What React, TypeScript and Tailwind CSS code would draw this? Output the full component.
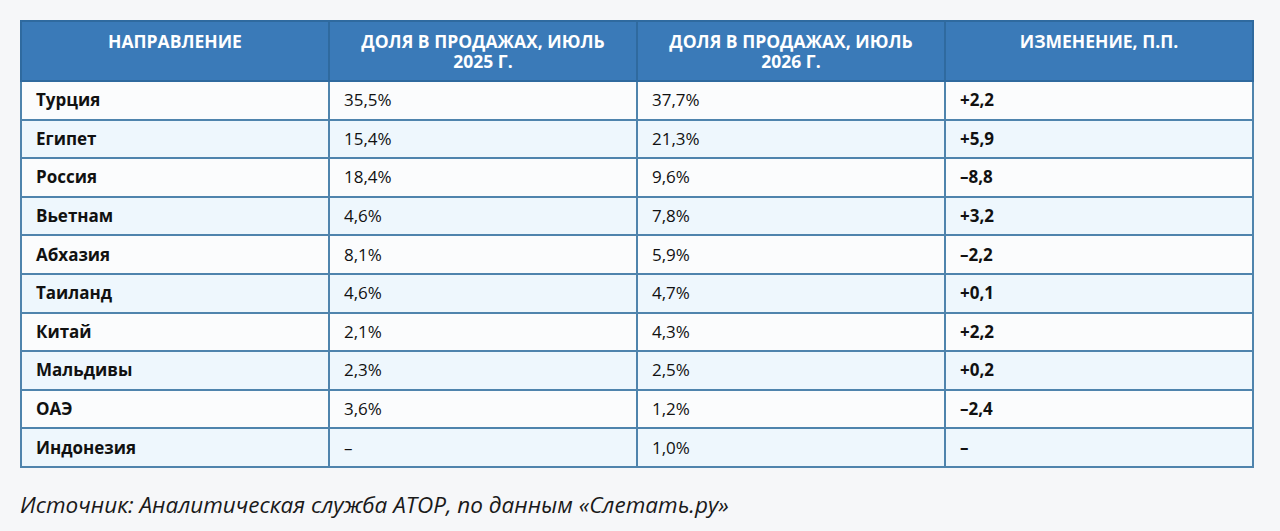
import React from 'react';

const rows: [string, string, string, string][] = [
  ['Турция', '35,5%', '37,7%', '+2,2'],
  ['Египет', '15,4%', '21,3%', '+5,9'],
  ['Россия', '18,4%', '9,6%', '–8,8'],
  ['Вьетнам', '4,6%', '7,8%', '+3,2'],
  ['Абхазия', '8,1%', '5,9%', '–2,2'],
  ['Таиланд', '4,6%', '4,7%', '+0,1'],
  ['Китай', '2,1%', '4,3%', '+2,2'],
  ['Мальдивы', '2,3%', '2,5%', '+0,2'],
  ['ОАЭ', '3,6%', '1,2%', '–2,4'],
  ['Индонезия', '–', '1,0%', '–'],
];

const headers = ['НАПРАВЛЕНИЕ', 'ДОЛЯ В ПРОДАЖАХ, ИЮЛЬ 2025 Г.', 'ДОЛЯ В ПРОДАЖАХ, ИЮЛЬ 2026 Г.', 'ИЗМЕНЕНИЕ, П.П.'];

export default function App() {
  return (
    <div className="w-[1280px] h-[531px] bg-[#f6f7f9] pt-[20px] pl-[20px] font-['Open_Sans',sans-serif] text-[#111]">
      <table className="w-[1234px] border-collapse table-fixed border-2 border-[#4a7da6]">
        <thead>
          <tr className="bg-[#3a7ab8] h-[60px]">
            {headers.map((h) => (
              <th
                key={h}
                className="align-top pt-[9px] px-[24px] border-2 border-[#2f6a9f] text-white text-[17.5px] leading-[20px] font-bold"
              >
                {h}
              </th>
            ))}
          </tr>
        </thead>
        <tbody>
          {rows.map((r, i) => (
            <tr key={r[0]} className={`h-[38.6px] ${i % 2 === 0 ? 'bg-[#fbfcfd]' : 'bg-[#eef7fd]'}`}>
              {r.map((c, j) => (
                <td
                  key={j}
                  className={`border-2 border-[#4f84ad] pl-[14px] text-[17px] leading-[20px] ${j === 0 || j === 3 ? 'font-bold' : 'font-normal'}`}
                >
                  {c}
                </td>
              ))}
            </tr>
          ))}
        </tbody>
      </table>
      <p className="mt-[22px] text-[22.5px] leading-[30px] italic text-[#1a1a1a]">
        Источник: Аналитическая служба АТОР, по данным «Слетать.ру»
      </p>
    </div>
  );
}
